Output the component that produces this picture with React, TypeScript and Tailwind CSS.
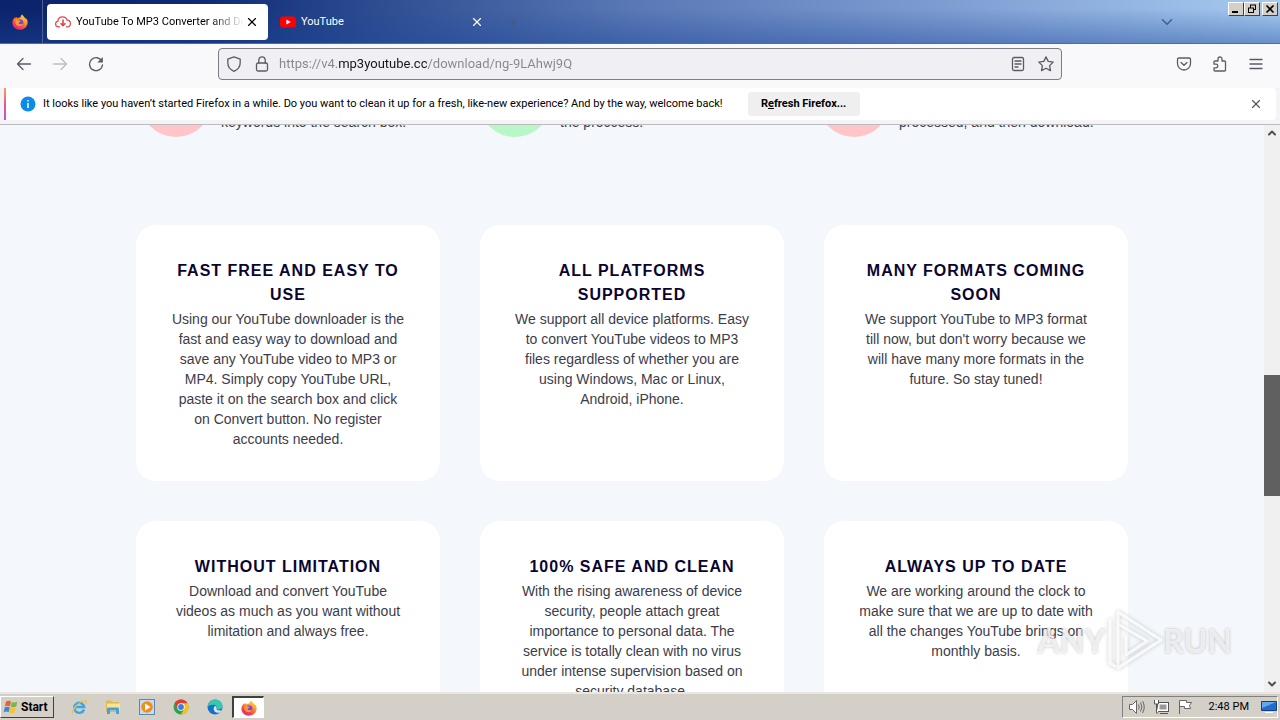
import type { ReactNode } from 'react';
import { ChevronDown, ChevronUp, X } from 'lucide-react';

const features = [
  {
    title: 'FAST FREE AND EASY TO USE',
    text: 'Using our YouTube downloader is the fast and easy way to download and save any YouTube video to MP3 or MP4. Simply copy YouTube URL, paste it on the search box and click on Convert button. No register accounts needed.',
  },
  {
    title: 'ALL PLATFORMS SUPPORTED',
    text: 'We support all device platforms. Easy to convert YouTube videos to MP3 files regardless of whether you are using Windows, Mac or Linux, Android, iPhone.',
  },
  {
    title: 'MANY FORMATS COMING SOON',
    text: "We support YouTube to MP3 format till now, but don't worry because we will have many more formats in the future. So stay tuned!",
  },
  {
    title: 'WITHOUT LIMITATION',
    text: 'Download and convert YouTube videos as much as you want without limitation and always free.',
  },
  {
    title: '100% SAFE AND CLEAN',
    text: 'With the rising awareness of device security, people attach great importance to personal data. The service is totally clean with no virus under intense supervision based on security database.',
  },
  {
    title: 'ALWAYS UP TO DATE',
    text: 'We are working around the clock to make sure that we are up to date with all the changes YouTube brings on monthly basis.',
  },
];

const steps = [
  { color: 'bg-[#ffc5c8]', text: 'keywords into the search box.' },
  { color: 'bg-[#b9f7c8]', text: 'the proccess.' },
  { color: 'bg-[#ffc5c8]', text: 'processed, and then download.' },
];

function FirefoxLogo({ className }: { className: string }) {
  return (
    <svg viewBox="0 0 16 16" className={className} aria-hidden="true">
      <defs>
        <linearGradient id="fx" x1="0.8" y1="0" x2="0.2" y2="1">
          <stop offset="0" stopColor="#ffe14a" />
          <stop offset="0.4" stopColor="#ff9128" />
          <stop offset="0.75" stopColor="#fb3a50" />
          <stop offset="1" stopColor="#e0208c" />
        </linearGradient>
      </defs>
      <path d="M15.3 6.2c-.4-1-1.2-2-1.8-2.3.5 1 .7 1.7.8 2.1C13.4 3.6 11.5 2.7 10.2.4 8.8 1.3 8.6 2.6 8.6 3.5c-1.3 0-2.5.5-3.3 1.2-.1-.5-.1-1 0-1.6-.7.3-1.3.8-1.7 1.3-.3-.3-.2-1.3-.2-1.5C2 3.8.4 5.9.4 8.7c0 4 3.4 7 7.6 7s7.6-3.2 7.6-7.3c0-.8-.1-1.5-.3-2.2z" fill="url(#fx)" />
      <circle cx="8" cy="8.9" r="3.4" fill="#7a42d8" />
      <path d="M3.4 6.3c1.6-1 3-.5 3.7.4.6.1 1.3.1 1.7.3-.4.9-1.4 1-1.9 1.4-.5.5-.2 1.7 1.2 1.9 1.3.2 1.9-.6 3-.5-.6 1.9-2.1 2.6-3.7 2.5-2.7-.2-4.7-2.7-4-6z" fill="#ff9a2a" />
    </svg>
  );
}

function ToolIcon({ children, faded }: { children: ReactNode; faded?: boolean }) {
  return (
    <svg
      viewBox="0 0 16 16"
      className={faded ? 'size-4 text-[#bdbdc2]' : 'size-4 text-[#5b5b66]'}
      fill="none"
      stroke="currentColor"
      strokeWidth="1.3"
      strokeLinecap="round"
      strokeLinejoin="round"
      aria-hidden="true"
    >
      {children}
    </svg>
  );
}

function ToolButton({ label, children, faded }: { label: string; children: ReactNode; faded?: boolean }) {
  return (
    <button aria-label={label} className="flex size-8 items-center justify-center rounded hover:bg-black/10">
      <ToolIcon faded={faded}>{children}</ToolIcon>
    </button>
  );
}

function WindowButton({ label, children }: { label: string; children: ReactNode }) {
  return (
    <button
      aria-label={label}
      className="h-3.5 w-4 border border-t-white border-r-[#404040] border-b-[#404040] border-l-white bg-[#d4d0c8]"
    >
      <svg viewBox="0 0 14 12" className="h-3 w-3.5" fill="none" stroke="#000" aria-hidden="true">
        {children}
      </svg>
    </button>
  );
}

function TabStrip() {
  return (
    <header className="flex h-11 shrink-0 border-b border-[#5c6a8c] bg-[linear-gradient(to_bottom,transparent_20%,#1d489a70),linear-gradient(to_right,#0b236a,#0f2b74_16%,#2f4e92_30%,#5a79b6_50%,#7f9fd3_75%,#a6caf0)] text-[11px]">
      <div className="flex w-[43px] items-center justify-center border-r border-[#4c5e94] pr-0.5">
        <FirefoxLogo className="size-4" />
      </div>
      <div className="flex items-center gap-1 pl-1" role="tablist">
        <div className="flex h-9 w-[221px] items-center rounded bg-white pl-2">
          <svg viewBox="0 0 16 16" className="size-4 shrink-0" fill="none" stroke="#e5434c" strokeWidth="1.2" aria-hidden="true">
            <path d="M5 12.8H3.6C1.8 12.8.6 11.6.6 10c0-1.5 1-2.5 2.3-2.8C3 4.6 5 2.8 7.6 2.8c2.2 0 3.9 1.3 4.5 3.3 1.9 0 3.3 1.4 3.3 3.3 0 2-1.4 3.4-3.3 3.4H11" />
            <path d="M8 5.5v6M5.6 9.3L8 11.7l2.4-2.4" strokeWidth="1.6" />
          </svg>
          <button role="tab" aria-selected="true" className="ml-[5px] w-[168px] overflow-hidden whitespace-nowrap pt-0.5 text-left text-black [mask-image:linear-gradient(to_right,#000_134px,transparent)]">
            YouTube To MP3 Converter and Do
          </button>
          <button aria-label="Close tab" className="flex size-4 items-center justify-center">
            <X className="size-3.5 text-black" strokeWidth={2} />
          </button>
        </div>
        <div className="flex h-9 w-[221px] items-center pl-2">
          <svg viewBox="0 0 16 16" className="size-4 shrink-0" aria-hidden="true">
            <rect x="0" y="2.5" width="16" height="11" rx="3" fill="#f00" />
            <path d="M6.4 5.6L10.8 8l-4.4 2.4z" fill="#fff" />
          </svg>
          <button role="tab" aria-selected="false" className="ml-[5px] w-[168px] pt-0.5 text-left text-white">
            YouTube
          </button>
          <button aria-label="Close tab" className="flex size-4 items-center justify-center">
            <X className="size-3.5 text-white" strokeWidth={2} />
          </button>
        </div>
        <button aria-label="New tab" className="flex size-8 items-center justify-center">
          <svg viewBox="0 0 16 16" className="size-4" stroke="#4a567a" aria-hidden="true">
            <path d="M8 4v8M4 8h8" />
          </svg>
        </button>
      </div>
      <button aria-label="List all tabs" className="mr-[45px] ml-auto flex w-8 items-center justify-center">
        <ChevronDown className="size-[18px] text-[#41608f]" strokeWidth={2} />
      </button>
      <div className="flex pt-0.5 pr-0.5">
        <WindowButton label="Minimize">
          <path d="M3 9h6" strokeWidth="2" />
        </WindowButton>
        <WindowButton label="Restore">
          <path d="M5 2h6M5.5 2v3M10.5 2v5M9 6.5h2M3 5h6M3.5 5v5M8.5 5v5M3 9.5h6" />
        </WindowButton>
        <div className="ml-0.5">
          <WindowButton label="Close">
            <path d="M3.5 2.5l7 7M10.5 2.5l-7 7" strokeWidth="1.7" />
          </WindowButton>
        </div>
      </div>
    </header>
  );
}

function NavBar() {
  return (
    <nav className="flex h-11 shrink-0 items-center bg-[#f9f9fb] px-2 pb-1">
      <div className="flex gap-1">
        <ToolButton label="Back">
          <path d="M14.5 8h-13M7 2.5L1.5 8 7 13.5" />
        </ToolButton>
        <ToolButton label="Forward" faded>
          <path d="M1.5 8h13M9 2.5L14.5 8 9 13.5" />
        </ToolButton>
        <ToolButton label="Reload">
          <path d="M14 5.5A6.5 6.5 0 1 0 14.5 9" />
          <path d="M14.8 1v5.5H9.3z" fill="currentColor" stroke="none" />
        </ToolButton>
      </div>
      <div className="mx-[106px] flex h-8 min-w-0 flex-1 items-center rounded border border-[#7d7d86] bg-[#f0f0f4] px-[7px]">
        <ToolIcon>
          <path d="M8 .8l6.2 2.4v3.6c0 4-2.5 7-6.2 8.5C4.3 13.8 1.8 10.8 1.8 6.8V3.2z" />
        </ToolIcon>
        <span className="ml-3 flex">
          <ToolIcon>
            <rect x="2.5" y="7" width="11" height="8" rx="1.5" />
            <path d="M4.8 7V4a3.2 3.2 0 0 1 6.4 0v3" />
          </ToolIcon>
        </span>
        <input
          aria-label="Address"
          defaultValue="https://v4.mp3youtube.cc/download/ng-9LAhwj9Q"
          className="ml-[9px] min-w-0 flex-1 bg-[linear-gradient(to_right,#85858d_60px,#15141a_60px,#15141a_148px,#85858d_148px)] bg-clip-text text-[13px] text-transparent outline-none"
        />
        <span className="flex gap-3">
          <ToolIcon>
            <rect x="2.5" y="1.5" width="11" height="13" rx="1.5" />
            <path d="M5 5h6M5 8h6M5 11h3" />
          </ToolIcon>
          <ToolIcon>
            <path d="M8 .9l2.2 4.5 5 .7-3.6 3.5.9 5L8 12.2l-4.5 2.4.9-5L.8 6.1l5-.7z" />
          </ToolIcon>
        </span>
      </div>
      <div className="flex gap-1">
        <ToolButton label="Save to Pocket">
          <path d="M2.8 2h10.4c.8 0 1.3.5 1.3 1.3v4.2a6.5 6.5 0 0 1-13 0V3.3C1.5 2.5 2 2 2.8 2z" />
          <path d="M5 6.5l3 2.8 3-2.8" />
        </ToolButton>
        <ToolButton label="Extensions">
          <path d="M3 15h9.5c.6 0 1-.4 1-1V6c0-.6-.4-1-1-1H10V3a2 2 0 0 0-4 0v2H2.8c-.5 0-.8.3-.8.8v2.4h2a1.8 1.8 0 0 1 0 3.6H2V14c0 .6.4 1 1 1z" />
        </ToolButton>
        <ToolButton label="Open menu">
          <path d="M2 3.5h12M2 8h12M2 12.5h12" />
        </ToolButton>
      </div>
    </nav>
  );
}

function NotificationBar() {
  return (
    <div className="shrink-0 border-b border-[#bcbcc0] bg-[#f4f4f6] px-1 pb-1 text-[11px]">
      <div className="flex h-8 items-center rounded bg-white pr-3">
        <div className="h-full w-0.5 bg-linear-to-b from-[#ff9a5a] via-[#f2508c] to-[#b055e0]" />
        <svg viewBox="0 0 16 16" className="ml-[14px] size-4" aria-hidden="true">
          <circle cx="8" cy="8" r="7.5" fill="#0a8ce8" />
          <path d="M8 7v5M8 4v1.5" stroke="#fff" strokeWidth="1.5" />
        </svg>
        <p className="ml-[7px] text-black">
          It looks like you haven’t started Firefox in a while. Do you want to clean it up for a fresh, like-new experience? And by the way, welcome back!
        </p>
        <button className="ml-[25px] h-6 w-28 rounded bg-[#efefef] font-bold text-black">
          R<span className="underline">e</span>fresh Firefox...
        </button>
        <button aria-label="Close" className="ml-auto flex size-4 items-center justify-center">
          <X className="size-3.5 text-[#55555f]" strokeWidth={2} />
        </button>
      </div>
    </div>
  );
}

function Page() {
  return (
    <div className="relative flex min-h-0 flex-1">
      <main className="flex-1 overflow-hidden bg-[#f4f7fb] px-[136px] font-['Liberation_Sans',Arial,sans-serif] text-sm leading-5 text-[#3c3c4a]">
        <div className="-mt-[60px] grid grid-cols-3 gap-[25px]">
          {steps.map((step) => (
            <div key={step.text} className="flex h-[72px] items-end gap-[9px]">
              <div className={`ml-1 size-[72px] shrink-0 rounded-full ${step.color}`} />
              <p className="whitespace-nowrap pb-[5px]">{step.text}</p>
            </div>
          ))}
        </div>
        <div className="mt-[88px] grid grid-cols-3 gap-10">
          {features.map((f) => (
            <section key={f.title} className="rounded-[20px] bg-white px-[34px] pt-[34px] pb-8 text-center">
              <h3 className="text-base leading-6 font-bold tracking-[1px] text-[#0a0530]">{f.title}</h3>
              <p className="mt-0.5">{f.text}</p>
            </section>
          ))}
        </div>
      </main>
      <div className="flex w-4 flex-col items-center bg-[#f0f0f0] text-[#505050]">
        <ChevronUp className="mt-0.5 size-3" strokeWidth={4} />
        <div className="mt-[236px] h-[121px] w-full bg-[#606060]" />
        <ChevronDown className="mt-auto mb-0.5 size-3" strokeWidth={4} />
      </div>
      <Watermark />
    </div>
  );
}

function Watermark() {
  return (
    <div className="pointer-events-none absolute right-12 bottom-5 flex items-center font-[Lato,sans-serif] text-[32px] leading-[60px] font-bold text-white/70 [text-shadow:0_0_3px_#00000040]">
      <span>ANY</span>
      <svg viewBox="0 0 58 62" className="h-[62px] w-[58px] drop-shadow-[0_0_2px_#00000040]" fill="none" stroke="#fff" strokeOpacity="0.8" strokeWidth="3" strokeLinejoin="round" aria-hidden="true">
        <path d="M5 9v44l6 4M13 2v56l43-28zM13 14l29 17-21 14V26" />
      </svg>
      <span>RUN</span>
    </div>
  );
}

function TaskButton({ label, children, active }: { label: string; children: ReactNode; active?: boolean }) {
  return (
    <button
      aria-label={label}
      className={
        active
          ? 'flex h-[22px] w-8 items-center justify-center border border-t-2 border-l-2 border-t-[#404040] border-r-white border-b-white border-l-[#404040] bg-white'
          : 'flex h-[22px] w-[34px] items-center justify-center'
      }
    >
      {children}
    </button>
  );
}

function Taskbar() {
  return (
    <footer className="flex h-7 shrink-0 items-center border-t-2 border-[#e9e7e2] bg-[#d4d0c8] py-0.5 pr-0.5 text-[11px] text-black">
      <button className="flex h-[22px] w-[54px] items-center gap-0.5 border border-t-white border-r-[#404040] border-b-[#404040] border-l-white pl-0.5 text-xs font-bold">
        <svg viewBox="0 0 16 16" className="size-4" aria-hidden="true">
          <path d="M3 2.5c2-1 3.500-.8 5 0L7 7.300c-1.500-.8-3-.9-5 0z" fill="#e8622c" />
          <path d="M8.800 3c1.600.8 3.400.9 5.600-.2l-1.200 4.800c-2 1-3.800.9-5.400.1z" fill="#7db542" />
          <path d="M1.800 8.300c2-.9 3.500-.8 5 0l-1.200 4.900c-1.400-.8-3-.9-4.900 0z" fill="#3f83d8" />
          <path d="M7.500 8.800c1.700.8 3.400.8 5.400-.2l-1.200 4.900c-2 .9-3.800.9-5.400.1z" fill="#f7c331" />
        </svg>
        Start
      </button>
      <div className="ml-2 flex">
        <TaskButton label="Internet Explorer">
          <svg viewBox="0 0 16 16" className="size-4" fill="none" aria-hidden="true">
            <path d="M13 10.5A5 5 0 1 1 13.2 8H4" stroke="#3aa5e8" strokeWidth="2.4" />
            <path d="M2 14.5C-.5 12 8 2 14.5 1.5c1.5 0 1 2 .2 3" stroke="#f1bf3a" strokeWidth="1.2" />
          </svg>
        </TaskButton>
        <TaskButton label="File Explorer">
          <svg viewBox="0 0 16 16" className="size-4" aria-hidden="true">
            <path d="M1 1.5h5l1 1.5h7v10H1z" fill="#dcb957" />
            <path d="M2 4.5h13V12H2z" fill="#f9e48f" />
            <path d="M2 15v-5c0-1 .6-1.5 1.5-1.5h9c1 0 1.5.5 1.5 1.5v5h-3v-3.5H5V15z" fill="#4a9fd6" />
          </svg>
        </TaskButton>
        <TaskButton label="Media Player">
          <svg viewBox="0 0 16 16" className="size-4" aria-hidden="true">
            <rect x=".5" y=".5" width="15" height="15" fill="#c3def2" stroke="#5c87ad" />
            <circle cx="8" cy="8" r="5.8" fill="#f28c1a" />
            <path d="M6 4.5L11.5 8 6 11.5z" fill="#fff" />
          </svg>
        </TaskButton>
        <TaskButton label="Chrome">
          <svg viewBox="0 0 16 16" className="size-4" aria-hidden="true">
            <circle cx="8" cy="8" r="7.5" fill="#34a04f" />
            <path d="M1.5 4.25A7.5 7.5 0 0 1 14.5 4.25H8L4.8 9.9z" fill="#e53c2f" />
            <path d="M14.5 4.25A7.5 7.5 0 0 1 8 15.5L11.2 9.9 8 4.25z" fill="#fbc116" />
            <circle cx="8" cy="8" r="3.7" fill="#fff" />
            <circle cx="8" cy="8" r="2.9" fill="#3b7ded" />
          </svg>
        </TaskButton>
        <TaskButton label="Edge">
          <svg viewBox="0 0 16 16" className="size-4" aria-hidden="true">
            <circle cx="8" cy="8" r="7.5" fill="#1471c4" />
            <path d="M.5 8C.8 3.5 4 .5 8 .5c4.3 0 7.5 3 7.5 6.3 0 2.2-1.5 3.7-3.8 3.7-1.5 0-2.5-.5-2.2-1.2.8-1.8-.5-3.6-3-3.6C4 5.7 1.5 6.5.5 8z" fill="#38c6b0" />
            <path d="M9.5 9.3c-.5 1.6 1.5 2.7 5.3 1.9-.7 1.2-1.3 1.9-2.3 2.6-3.5.3-6-1.5-5.8-4.3.1-1.3.8-2 1.6-2.4.9.5 1.4 1.3 1.2 2.2z" fill="#d6e6ef" />
          </svg>
        </TaskButton>
        <TaskButton label="Firefox" active>
          <FirefoxLogo className="size-4" />
        </TaskButton>
      </div>
      <div className="ml-auto flex h-[22px] items-center border border-t-[#808080] border-r-white border-b-white border-l-[#808080] pl-1.5">
        <div className="flex gap-2">
          <svg viewBox="0 0 16 16" className="size-4" fill="#fff" stroke="#666" aria-hidden="true">
            <path d="M.5 5.5h3l4-4v13l-4-4h-3z" />
            <path d="M9.5 5.5q1.5 2.5 0 5M11.5 3.5q3 4.5 0 9M13.5 2q3.5 6 0 12" fill="none" />
          </svg>
          <svg viewBox="0 0 16 16" className="size-4" fill="#fff" stroke="#555" aria-hidden="true">
            <rect x="4.5" y="3.5" width="11" height="9" />
            <rect x="6.5" y="5.5" width="7" height="5" fill="#999" stroke="none" />
            <path d="M7 14.5h8M1.5 1v4h4V1M3.5 5v9h2" />
          </svg>
          <svg viewBox="0 0 16 16" className="size-4" fill="#fff" stroke="#666" aria-hidden="true">
            <path d="M2.5 15V1.5h7v2h5l-2 3 1 3h-6v-2h-5" />
          </svg>
        </div>
        <time className="ml-4">2:48 PM</time>
        <svg viewBox="0 0 16 16" className="ml-3 size-4" aria-hidden="true">
          <path d="M.5 2.5h15v9H.5z" fill="#1f6ed0" stroke="#173f78" />
          <path d="M1 3h14L1 9z" fill="#62a9ee" />
          <path d="M4 13.5h8" stroke="#fff" />
        </svg>
      </div>
    </footer>
  );
}

export default function App() {
  return (
    <div className="flex h-screen flex-col overflow-hidden font-[Roboto,sans-serif]">
      <TabStrip />
      <NavBar />
      <NotificationBar />
      <Page />
      <Taskbar />
    </div>
  );
}
